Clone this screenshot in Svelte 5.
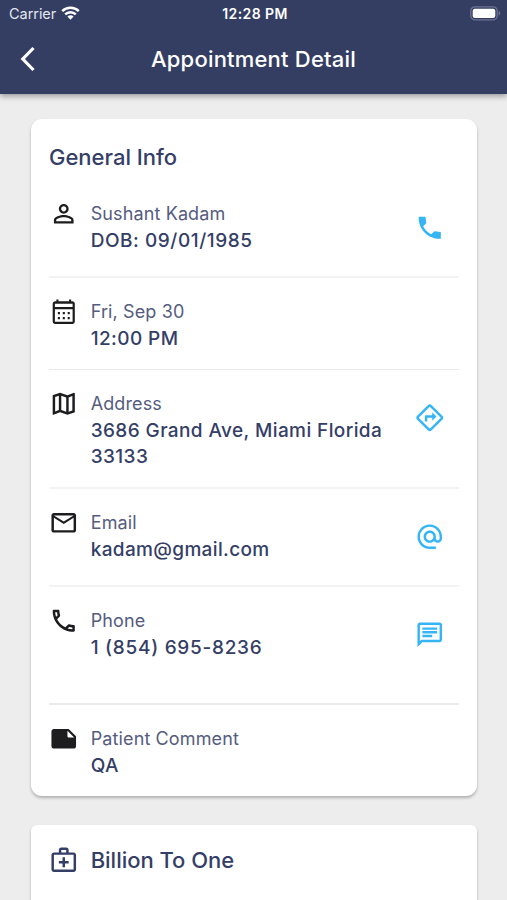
<script lang="ts">
  type Row = {
    id: string;
    icon: string;
    label: string;
    value: string;
    action?: string;
    actionLabel?: string;
  };

  // 24x24 icon paths
  const icons: Record<string, string> = {
    person:
      'M12 4C9.79 4 8 5.79 8 8s1.79 4 4 4 4-1.79 4-4-1.79-4-4-4zm0 1.9c1.16 0 2.1.94 2.1 2.1s-.94 2.1-2.1 2.1S9.9 9.16 9.9 8s.94-2.1 2.1-2.1zM12 13c-2.67 0-8 1.34-8 4v3h16v-3c0-2.66-5.33-4-8-4zm6.1 5.1H5.9V17c0-.64 3.13-2.1 6.1-2.1s6.1 1.46 6.1 2.1v1.1z',
    calendar:
      'M19 3.5h-1V2h-1.7v1.5H7.7V2H6v1.5H5c-1.11 0-2 .9-2 2V20c0 1.1.89 2 2 2h14c1.1 0 2-.9 2-2V5.500c0-1.1-.9-2-2-2zm.2 16.700H4.800V10h14.400v10.200zm0-12H4.800V5.500h14.400v2.700zM7.200 12.300h1.700v1.700H7.200zm4 0h1.700v1.700h-1.700zm4 0h1.700v1.700h-1.700zm-8 4h1.700v1.700H7.200zm4 0h1.700v1.700h-1.700zm4 0h1.700v1.700h-1.700z',
    map:
      'M20.5 3l-.16.03L15 5.1 9 3 3.36 4.9c-.21.07-.36.25-.36.48V20.5c0 .28.22.5.5.5l.16-.03L9 18.9l6 2.1 5.64-1.9c.21-.07.36-.25.36-.48V3.5c0-.28-.22-.5-.5-.5zM10 5.47l4 1.4v11.66l-4-1.4V5.47zm-5 .99l3-1.01v11.7l-3 1.16V6.46zm14 11.08l-3 1.01V6.86l3-1.16v11.84z',
    mail:
      'M22 6c0-1.1-.9-2-2-2H4c-1.1 0-2 .9-2 2v12c0 1.1.9 2 2 2h16c1.1 0 2-.9 2-2V6zm-2 0l-8 5-8-5h16zm0 12H4V8l8 5 8-5v10z',
    phone:
      'M6.54 5c.06.89.21 1.76.45 2.59l-1.2 1.2c-.41-1.2-.67-2.47-.76-3.79h1.51m9.86 12.02c.85.24 1.72.39 2.6.45v1.49c-1.32-.09-2.59-.35-3.8-.75l1.2-1.19M7.5 3H4c-.55 0-1 .45-1 1 0 9.39 7.61 17 17 17 .55 0 1-.45 1-1v-3.49c0-.55-.45-1-1-1-1.24 0-2.45-.2-3.57-.57-.1-.04-.21-.05-.31-.05-.26 0-.51.1-.71.29l-2.2 2.2c-2.83-1.45-5.15-3.76-6.59-6.59l2.2-2.2c.28-.28.36-.67.25-1.02C8.7 6.45 8.5 5.25 8.5 4c0-.55-.45-1-1-1z',
    note:
      'M16 4H4c-1.1 0-2 .9-2 2v12.01c0 1.1.9 1.99 2 1.99h16c1.1 0 2-.9 2-2v-8l-6-6zm0 7c-.55 0-1-.45-1-1V5.5l5.500 5.500H16z',
    call:
      'M21 15.46l-5.27-.61-2.52 2.52c-2.83-1.44-5.15-3.75-6.59-6.59l2.53-2.53L8.54 3H3.03C2.45 13.18 10.82 21.55 21 20.97v-5.51z',
    directions:
      'M22.43 10.59l-9.01-9.01c-.75-.75-2.07-.76-2.83 0l-9 9c-.78.78-.78 2.04 0 2.82l9 9c.39.39.9.58 1.41.58.51 0 1.02-.19 1.41-.58l8.99-8.99c.79-.76.8-2.02.03-2.82zm-10.42 10.4l-9-9 9-9 9 9-9 9zM8 11v4h2v-3h4v2.5l3.5-3.5L14 7.5V10H9c-.55 0-1 .45-1 1z',
    at:
      'M12 1.95c-5.52 0-10 4.48-10 10s4.48 10 10 10h5v-2h-5c-4.34 0-8-3.66-8-8s3.66-8 8-8 8 3.66 8 8v1.43c0 .79-.71 1.57-1.5 1.57s-1.5-.78-1.5-1.57v-1.43c0-2.76-2.24-5-5-5s-5 2.24-5 5 2.24 5 5 5c1.38 0 2.64-.56 3.54-1.47.65.89 1.77 1.47 2.96 1.47 1.97 0 3.5-1.6 3.5-3.57v-1.43c0-5.52-4.48-10-10-10zm0 13c-1.66 0-3-1.34-3-3s1.34-3 3-3 3 1.34 3 3-1.34 3-3 3z',
    chat:
      'M4 4h16v12H5.17L4 17.17V4m0-2c-1.1 0-1.99.9-1.99 2L2 22l4-4h14c1.1 0 2-.9 2-2V4c0-1.1-.9-2-2-2H4zm2 10h8v2H6v-2zm0-3h12v2H6V9zm0-3h12v2H6V6z',
    medical:
      'M20 6h-4V4c0-1.1-.9-2-2-2h-4c-1.1 0-2 .9-2 2v2H4c-1.1 0-2 .9-2 2v12c0 1.1.9 2 2 2h16c1.1 0 2-.9 2-2V8c0-1.1-.9-2-2-2zM10 4h4v2h-4V4zm10 16H4V8h16v12zM13 10h-2v3H8v2h3v3h2v-3h3v-2h-3z',
  };

  const rows: Row[] = [
    { id: 'patient', icon: 'person', label: 'Sushant Kadam', value: 'DOB: 09/01/1985', action: 'call', actionLabel: 'Call patient' },
    { id: 'date', icon: 'calendar', label: 'Fri, Sep 30', value: '12:00 PM' },
    { id: 'address', icon: 'map', label: 'Address', value: '3686 Grand Ave, Miami Florida 33133', action: 'directions', actionLabel: 'Get directions' },
    { id: 'email', icon: 'mail', label: 'Email', value: 'kadam@gmail.com', action: 'at', actionLabel: 'Send email' },
    { id: 'phone', icon: 'phone', label: 'Phone', value: '1 (854) 695-8236', action: 'chat', actionLabel: 'Send message' },
    { id: 'comment', icon: 'note', label: 'Patient Comment', value: 'QA' },
  ];
</script>

{#snippet icon(name: string)}
  <svg class="icon" viewBox="0 0 24 24" aria-hidden="true">
    <path d={icons[name]} fill="currentColor" fill-rule={name === 'note' ? 'evenodd' : 'nonzero'} />
  </svg>
{/snippet}

<div class="screen">
  <header class="header">
    <div class="status-bar">
      <div class="carrier">
        <span>Carrier</span>
        <svg width="19" height="14" viewBox="0 0 19 14" fill="none" stroke="currentColor" stroke-width="2.5" aria-hidden="true">
          <path d="M1.2 5.2a11.8 11.8 0 0 1 16.6 0M4.2 8.4a7.6 7.6 0 0 1 10.6 0" />
          <path d="M9.5 13.8L6.4 10.6a4.5 4.5 0 0 1 6.2 0z" fill="currentColor" stroke="none" />
        </svg>
      </div>
      <span class="time">12:28 PM</span>
      <div class="battery">
        <svg width="31" height="15" viewBox="0 0 31 15" aria-hidden="true">
          <rect x="0.8" y="0.8" width="26.4" height="13" rx="4" fill="none" stroke="#6d7393" stroke-width="1.3" />
          <rect x="2.7" y="2.7" width="22.6" height="9.2" rx="2.2" fill="#fff" />
          <path d="M28.6 5v4.6c1-.4 1.7-1.2 1.7-2.3s-.7-1.9-1.7-2.3z" fill="#6d7393" />
        </svg>
      </div>
    </div>
    <div class="nav-bar">
      <button class="back-btn" aria-label="Back">
        <svg width="16" height="26" viewBox="0 0 16 26" fill="none" stroke="currentColor" stroke-width="3.2" aria-hidden="true">
          <path d="M13.5 2L2.800 13L13.500 24" />
        </svg>
      </button>
      <h1 class="title">Appointment Detail</h1>
    </div>
  </header>

  <main class="content">
    <section class="card">
      <h2 class="card-title">General Info</h2>
      {#each rows as row (row.id)}
        <div class="row {row.id}">
          {@render icon(row.icon)}
          <div class="text">
            <span class="label">{row.label}</span>
            <span class="value">{row.value}</span>
          </div>
          {#if row.action}
            <button class="action-btn" aria-label={row.actionLabel}>
              {@render icon(row.action)}
            </button>
          {/if}
        </div>
      {/each}
    </section>

    <section class="card lab-card">
      {@render icon('medical')}
      <h2 class="lab-title">Billion To One</h2>
    </section>
  </main>
</div>

<style>
  :global(body) {
    margin: 0;
    overflow: hidden;
  }

  .screen {
    display: flex;
    flex-direction: column;
    height: 900px;
    overflow: hidden;
    background: #ededed;
    font-family: Inter, 'Liberation Sans', sans-serif;
    color: #343e66;
  }

  button {
    padding: 0;
    border: none;
    background: none;
    font: inherit;
    cursor: pointer;
  }

  h1,
  h2 {
    margin: 0;
    font-weight: 450;
  }

  /* Header */
  .header {
    z-index: 1;
    flex-shrink: 0;
    height: 94px;
    background: #343e63;
    color: #fff;
    box-shadow: 0 2px 6px rgba(0, 0, 0, 0.38);
  }

  .status-bar {
    display: grid;
    grid-template-columns: 1fr auto 1fr;
    align-items: center;
    height: 27px;
    padding: 0 6px 0 9px;
    font-size: 14.5px;
  }

  .carrier {
    display: flex;
    align-items: center;
    gap: 5px;
    color: #e3e6f0;
    letter-spacing: -0.05px;
  }

  .carrier svg {
    margin-top: -2px;
    color: #fff;
  }

  .time {
    font-size: 14px;
    font-weight: 600;
    letter-spacing: 0.4px;
  }

  .battery {
    display: flex;
    justify-content: flex-end;
  }

  .nav-bar {
    display: grid;
    grid-template-columns: 60px 1fr 60px;
    align-items: center;
    height: 64px;
  }

  .back-btn {
    display: flex;
    padding-left: 20px;
    color: #fff;
  }

  .title {
    text-align: center;
    font-size: 22px;
    font-weight: 500;
    letter-spacing: 0.2px;
  }

  /* Cards */
  .content {
    display: flex;
    flex-direction: column;
    gap: 29px;
    padding: 25px 30px 0 31px;
  }

  .card {
    box-sizing: border-box;
    flex-shrink: 0;
    padding: 0 18px;
    border-radius: 11px;
    background: #fff;
    box-shadow: 0 2px 3px rgba(0, 0, 0, 0.26);
  }

  .card-title {
    padding-top: 24px;
    font-size: 22px;
    line-height: 28px;
    letter-spacing: 0;
  }

  .icon {
    display: block;
    flex-shrink: 0;
    width: 29.5px;
    height: 29.5px;
  }

  .row {
    display: flex;
    align-items: flex-start;
    padding: 21px 15px 17px 0;
    border-bottom: 2px solid #f3f3f3;
  }

  .row > .icon {
    margin-top: -2px;
    margin-left: -0.5px;
    color: #1d1d1f;
  }

  .row.patient {
    padding-top: 30px;
  }

  .row.date {
    border-bottom: 1px solid #e9e9e9;
  }

  .row.address {
    padding-bottom: 16.5px;
  }

  .row.phone {
    padding-bottom: 37px;
    border-bottom-color: #ebebeb;
  }

  .row.comment {
    padding-bottom: 16.5px;
    border-bottom: none;
  }

  .text {
    display: flex;
    flex: 1;
    flex-direction: column;
    min-width: 0;
    padding-left: 12.7px;
    line-height: 26.5px;
  }

  .label {
    color: #555c80;
    font-size: 18px;
    letter-spacing: 0.12px;
  }

  .value {
    font-size: 19px;
    font-weight: 450;
    letter-spacing: 0.4px;
  }

  .patient .value {
    letter-spacing: 0.55px;
  }

  .phone .value {
    letter-spacing: 0.72px;
  }

  .email .value {
    letter-spacing: 0.35px;
  }

  .action-btn {
    display: flex;
    align-items: center;
    height: 58px;
    margin-top: -2px;
    margin-bottom: 2px;
    color: #36b5f6;
  }

  .lab-card {
    display: flex;
    align-items: center;
    height: 180px;
    padding-bottom: 110px;
    border-radius: 6px;
  }

  .lab-card .icon {
    margin-left: -0.5px;
  }

  .lab-title {
    padding-left: 12.7px;
    font-size: 22px;
    letter-spacing: -0.03px;
  }
</style>
